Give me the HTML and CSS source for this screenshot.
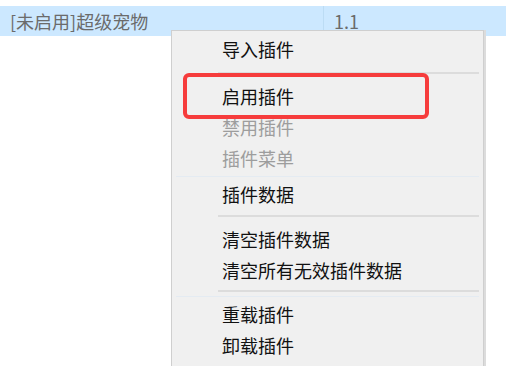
FILE: index.html
```html
<!DOCTYPE html>
<html lang="zh-CN">
<head>
    <meta charset="UTF-8">
    <meta name="viewport" content="width=device-width, initial-scale=1.0">
    <title>插件列表</title>
    <link rel="stylesheet" href="styles.css">
</head>
<body>
    <div class="list">
        <div class="row selected">
            <div class="cell name">[未启用]超级宠物</div>
            <div class="cell version">1.1</div>
        </div>
    </div>

    <!-- context menu -->
    <div class="menu">
        <div class="item">导入插件</div>
        <div class="sep"></div>
        <div class="item">启用插件</div>
        <div class="item disabled">禁用插件</div>
        <div class="item disabled">插件菜单</div>
        <div class="ghost"></div>
        <div class="item">插件数据</div>
        <div class="sep mid"></div>
        <div class="item">清空插件数据</div>
        <div class="item">清空所有无效插件数据</div>
        <div class="sep last"></div>
        <div class="item">重载插件</div>
        <div class="item">卸载插件</div>
    </div>

    <div class="mark"></div>
</body>
</html>
```

FILE: styles.css
```css
body {
    margin: 0;
    background: #fff;
    font-family: "Noto Sans CJK SC", "Noto Sans", sans-serif;
    font-size: 18px;
    height: 366px;
    overflow: hidden;
    position: relative;
}
.list {
    padding-top: 6px;
}
.row {
    display: flex;
    height: 30px;
    align-items: center;
}
.row.selected {
    background: #cce8ff;
}
.cell {
    height: 100%;
    display: flex;
    align-items: center;
    color: #6b6b6b;
}
.name {
    width: 313px;
    padding-left: 10px;
    border-right: 1px solid #bcdcf4;
}
.version {
    padding-left: 10px;
}
.menu {
    position: absolute;
    left: 171px;
    top: 30px;
    width: 311px;
    height: 360px;
    background: #f0f0f0;
    border: 1px solid #cfcfcf;
    box-shadow: 2px 0 0 #dcdcdc;
    padding-top: 3px;
}
.item {
    height: 31px;
    line-height: 31px;
    padding-left: 50px;
    color: #111;
}
.item.disabled {
    color: #9d9d9d;
}
.sep {
    height: 16px;
    position: relative;
}
.sep::before {
    content: "";
    position: absolute;
    left: 46px;
    right: 4px;
    top: 7px;
    height: 2px;
    background: #dcdcdc;
}
.sep.mid {
    height: 14px;
}
.sep.mid::before {
    top: 5px;
}
.sep.last {
    height: 13px;
}
.sep.last::before {
    top: 4px;
}
.sep.last::after {
    content: "";
    position: absolute;
    left: 4px;
    right: 4px;
    top: 10px;
    height: 1px;
    background: #e4ebf2;
}
.ghost {
    height: 5px;
    position: relative;
}
.ghost::before {
    content: "";
    position: absolute;
    left: 4px;
    right: 4px;
    top: 2px;
    height: 1px;
    background: #e4ebf2;
}
.mark {
    position: absolute;
    left: 183px;
    top: 73px;
    width: 238px;
    height: 38px;
    border: 4px solid #f63c3c;
    border-radius: 6px;
}
```
